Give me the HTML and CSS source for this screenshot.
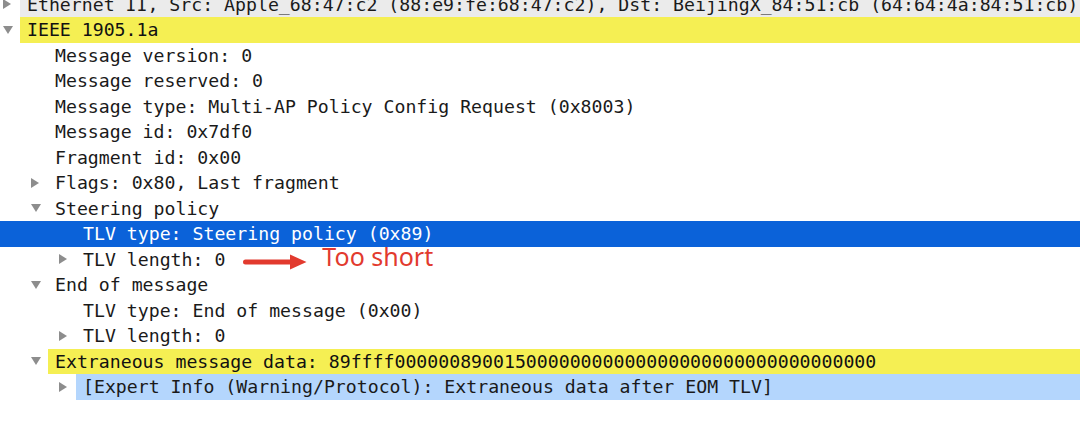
FILE: index.html
```html
<!DOCTYPE html>
<html lang="en">
<head>
    <meta charset="UTF-8">
    <meta name="viewport" content="width=device-width, initial-scale=1.0">
    <title>Packet Details</title>
    <link rel="stylesheet" href="styles.css">
</head>
<body>
    <div id="packet-tree">
        <div class="row lvl-0">
            <span class="toggle closed"><svg viewBox="0 0 10 10"><polygon points="0,0 8,5 0,10"/></svg></span>
            <span class="label shaded">Ethernet II, Src: Apple_68:47:c2 (88:e9:fe:68:47:c2), Dst: BeijingX_84:51:cb (64:64:4a:84:51:cb)</span>
        </div>
        <div class="row lvl-0">
            <span class="toggle open"><svg viewBox="0 0 10 10"><polygon points="0,1 10,1 5,9"/></svg></span>
            <span class="label warn">IEEE 1905.1a</span>
        </div>
        <div class="row lvl-1">
            <span class="toggle"></span>
            <span class="label">Message version: 0</span>
        </div>
        <div class="row lvl-1">
            <span class="toggle"></span>
            <span class="label">Message reserved: 0</span>
        </div>
        <div class="row lvl-1">
            <span class="toggle"></span>
            <span class="label">Message type: Multi-AP Policy Config Request (0x8003)</span>
        </div>
        <div class="row lvl-1">
            <span class="toggle"></span>
            <span class="label">Message id: 0x7df0</span>
        </div>
        <div class="row lvl-1">
            <span class="toggle"></span>
            <span class="label">Fragment id: 0x00</span>
        </div>
        <div class="row lvl-1">
            <span class="toggle closed"><svg viewBox="0 0 10 10"><polygon points="0,0 8,5 0,10"/></svg></span>
            <span class="label">Flags: 0x80, Last fragment</span>
        </div>
        <div class="row lvl-1">
            <span class="toggle open"><svg viewBox="0 0 10 10"><polygon points="0,1 10,1 5,9"/></svg></span>
            <span class="label">Steering policy</span>
        </div>
        <div class="row lvl-2 selected">
            <span class="toggle"></span>
            <span class="label">TLV type: Steering policy (0x89)</span>
        </div>
        <div class="row lvl-2">
            <span class="toggle closed"><svg viewBox="0 0 10 10"><polygon points="0,0 8,5 0,10"/></svg></span>
            <span class="label">
                <span>TLV length: 0</span>
                <span class="note">
                    <svg class="arrow" viewBox="0 0 64 16" width="64" height="16">
                        <line x1="2.5" y1="8" x2="52" y2="8"/>
                        <polygon points="47,0.5 63.5,8 47,15.5"/>
                    </svg>
                    <span class="note-text">Too short</span>
                </span>
            </span>
        </div>
        <div class="row lvl-1">
            <span class="toggle open"><svg viewBox="0 0 10 10"><polygon points="0,1 10,1 5,9"/></svg></span>
            <span class="label">End of message</span>
        </div>
        <div class="row lvl-2">
            <span class="toggle"></span>
            <span class="label">TLV type: End of message (0x00)</span>
        </div>
        <div class="row lvl-2">
            <span class="toggle closed"><svg viewBox="0 0 10 10"><polygon points="0,0 8,5 0,10"/></svg></span>
            <span class="label">TLV length: 0</span>
        </div>
        <div class="row lvl-1">
            <span class="toggle open"><svg viewBox="0 0 10 10"><polygon points="0,1 10,1 5,9"/></svg></span>
            <span class="label warn">Extraneous message data: 89ffff00000089001500000000000000000000000000000000</span>
        </div>
        <div class="row lvl-2">
            <span class="toggle closed"><svg viewBox="0 0 10 10"><polygon points="0,0 8,5 0,10"/></svg></span>
            <span class="label expert">[Expert Info (Warning/Protocol): Extraneous data after EOM TLV]</span>
        </div>
    </div>
</body>
</html>
```

FILE: styles.css
```css
body {
    margin: 0;
    padding: 0;
    background-color: #ffffff;
    color: #1a1a1a;
    font-family: "DejaVu Sans Mono", "Liberation Mono", monospace;
    font-size: 18.2px;
    overflow: hidden;
}

#packet-tree {
    margin-top: -8.5px;
    width: 100%;
}

.row {
    display: flex;
    align-items: center;
    height: 25.5px;
    white-space: nowrap;
}

.lvl-0 {
    padding-left: 3px;
}

.lvl-1 {
    padding-left: 31px;
}

.lvl-2 {
    padding-left: 59px;
}

.toggle {
    flex: none;
    width: 10px;
    height: 10px;
    margin-right: 7px;
}

.toggle svg {
    display: block;
    width: 10px;
    height: 10px;
    fill: #8d8d8d;
}

.label {
    flex: 1;
    display: flex;
    align-items: center;
    height: 100%;
    padding-left: 7px;
    min-width: 0;
}

.label.shaded {
    background-color: #ebebeb;
}

.label.warn {
    background-color: #f5ef53;
    color: #111111;
}

.label.expert {
    background-color: #b4d6fd;
}

.row.selected {
    background-color: #0b62d9;
    color: #ffffff;
}

.note {
    display: flex;
    align-items: center;
    margin-left: 18px;
    color: #e23a2e;
    font-family: "Noto Sans", "Liberation Sans", sans-serif;
    font-size: 25px;
    line-height: 25px;
}

.arrow {
    margin-top: 5px;
    margin-right: 15px;
}

.arrow line {
    stroke: #e23a2e;
    stroke-width: 5;
    stroke-linecap: round;
}

.arrow polygon {
    fill: #e23a2e;
}

.note-text {
    margin-top: -6px;
}
```
